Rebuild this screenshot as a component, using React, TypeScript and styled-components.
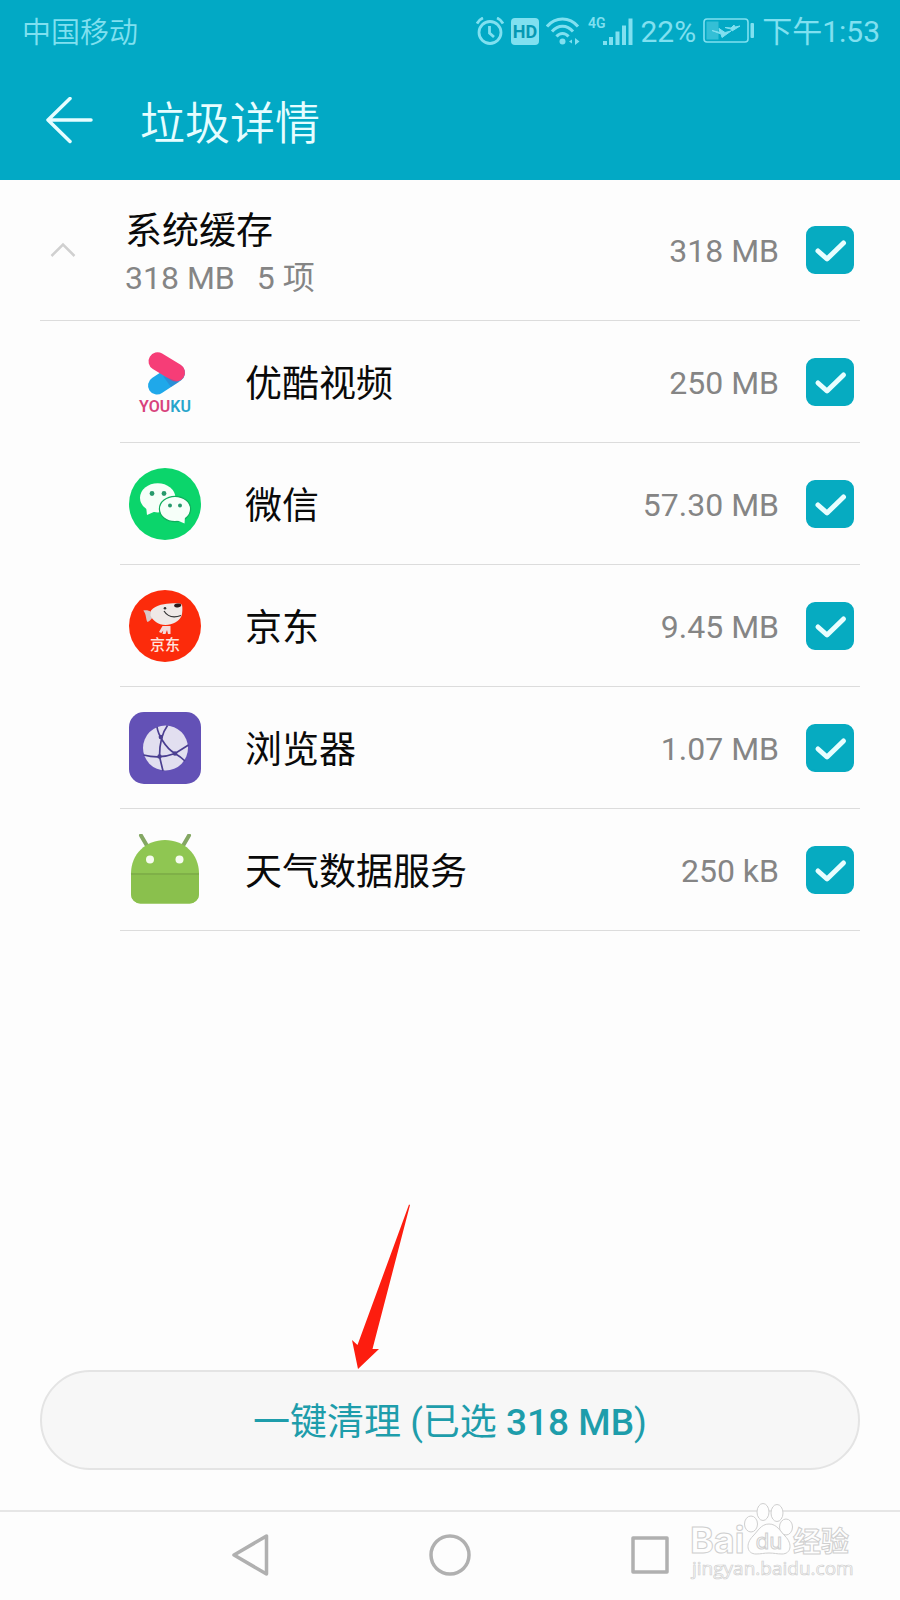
import React, { useState } from "react";
import styled, { createGlobalStyle } from "styled-components";

const GlobalStyle = createGlobalStyle`
  *, *::before, *::after { box-sizing: border-box; }
  body {
    margin: 0;
    background: #fdfdfd;
    color: #0a0a0a;
    font-family: Roboto, "Noto Sans CJK SC", sans-serif;
  }
  button, input { font: inherit; margin: 0; }
`;

const Page = styled.div`
  display: flex;
  flex-direction: column;
  min-height: 100vh;
`;

const Header = styled.header`
  background: #02a9c5;
`;

const StatusBar = styled.div`
  display: flex;
  align-items: center;
  justify-content: space-between;
  height: 62px;
  padding: 0 20px 0 22px;
  color: #80e0f0;
  font-size: 29px;
  line-height: 40px;
`;

const StatusText = styled.span`
  padding-top: 2px;
`;

const Carrier = styled(StatusText)`
  padding-top: 4px;
  font-weight: 350;
`;

const StatusIcons = styled.div`
  display: flex;
  align-items: center;
  gap: 7px;
  font-size: 30px;
`;

const AppBar = styled.div`
  display: flex;
  align-items: center;
  height: 118px;
  padding: 0 40px;
`;

const BackButton = styled.button`
  display: flex;
  width: 100px;
  padding: 0 6px;
  border: 0;
  background: none;
  color: #e6fdff;
  cursor: pointer;
`;

const Title = styled.h1`
  margin: 0;
  padding-top: 8px;
  color: #e6fdff;
  font-size: 45px;
  font-weight: 350;
  line-height: 60px;
`;

const Main = styled.main`
  flex: 1;
  padding: 0 40px;
`;

const GroupRow = styled.div`
  display: flex;
  align-items: center;
  height: 141px;
  padding-right: 6px;
  border-bottom: 1px solid #dcdcdc;
`;

const ExpandButton = styled.button`
  display: flex;
  width: 85px;
  padding: 10px;
  border: 0;
  background: none;
  cursor: pointer;
`;

const GroupText = styled.div`
  flex: 1;
  padding-top: 2px;
`;

const Name = styled.label`
  display: block;
  flex: 1;
  padding-top: 6px;
  font-size: 37px;
  line-height: 48px;
`;

const Summary = styled.div`
  display: flex;
  gap: 22px;
  color: #858585;
  font-size: 32px;
  line-height: 44px;
`;

const Size = styled.span`
  margin-right: 27px;
  padding-top: 2px;
  color: #858585;
  font-size: 32px;
  line-height: 44px;
`;

const List = styled.ul`
  margin: 0;
  padding: 0 0 0 80px;
  list-style: none;
`;

const Item = styled.li`
  display: flex;
  align-items: center;
  height: 122px;
  padding: 0 6px 0 9px;
  border-bottom: 1px solid #dcdcdc;
`;

const AppIcon = styled.svg`
  flex: none;
  width: 72px;
  height: 72px;
  margin-right: 44px;
`;

const CheckWrap = styled.span`
  display: grid;
  flex: none;
  width: 48px;
  height: 48px;

  > * { grid-area: 1 / 1; }
  > svg { pointer-events: none; }
`;

const CheckInput = styled.input`
  appearance: none;
  width: 48px;
  height: 48px;
  border: 2px solid #b5b5b5;
  border-radius: 9px;
  background: #fff;
  cursor: pointer;

  &:checked {
    border-color: #06abc1;
    background: #06abc1;
  }
`;

const Actions = styled.div`
  position: relative;
  padding: 0 40px 40px;
`;

const CleanButton = styled.button`
  display: block;
  width: 100%;
  height: 100px;
  padding: 0 0 2px;
  border: 2px solid #e4e4e4;
  border-radius: 50px;
  background: #f7f7f7;
  color: #1e9dab;
  font-size: 37px;
  cursor: pointer;
`;

const Amount = styled.span`
  font-weight: 500;
`;

const Pointer = styled.svg`
  position: absolute;
  bottom: 100%;
  left: calc(50% - 99px);
  width: 60px;
  height: 166px;
`;

const NavBar = styled.nav`
  position: relative;
  display: grid;
  grid-template-columns: repeat(3, 1fr);
  height: 90px;
  padding: 0 calc(100% / 6);
  border-top: 2px solid #e6e6e6;
`;

const NavButton = styled.button`
  display: grid;
  place-items: center;
  padding: 0;
  border: 0;
  background: none;
  cursor: pointer;
`;

const Watermark = styled.svg`
  position: absolute;
  right: 40px;
  bottom: 17px;
  width: 170px;
  height: 84px;
  pointer-events: none;
`;

function Check({ id, checked, onChange }: { id: string; checked: boolean; onChange: () => void }) {
  return (
    <CheckWrap>
      <CheckInput type="checkbox" id={id} checked={checked} onChange={onChange} />
      {checked && (
        <svg width="48" height="48" viewBox="0 0 48 48" fill="none" stroke="#e8feff" strokeWidth="5" strokeLinecap="round" strokeLinejoin="round">
          <path d="M12 25L21 33L37.500 17" />
        </svg>
      )}
    </CheckWrap>
  );
}

const YoukuIcon = () => (
  <AppIcon viewBox="0 0 72 72" aria-hidden="true">
    <path d="M28 39.500L47 27" stroke="#1fa8ea" strokeWidth="18" strokeLinecap="round" />
    <path d="M28.500 15.300L47 26.500" stroke="#f63d77" strokeWidth="18" strokeLinecap="round" />
    <path d="M34 30l16 6-8 5z" fill="#3b62b5" opacity=".35" />
    <text x="36" y="66" textAnchor="middle" fontFamily="Roboto, sans-serif" fontSize="16" fontWeight="600">
      <tspan fill="#d8437c">YOU</tspan>
      <tspan fill="#28a5cb">KU</tspan>
    </text>
  </AppIcon>
);

const WechatIcon = () => (
  <AppIcon viewBox="0 0 72 72" aria-hidden="true">
    <circle cx="36" cy="36" r="36" fill="#0bd56b" />
    <g fill="#f6fff9">
      <path d="M17 38l1 9 9-4z" />
      <ellipse cx="28.700" cy="29.800" rx="17.700" ry="14.600" />
      <ellipse cx="46" cy="41" rx="15.600" ry="12.600" stroke="#0fae5c" strokeWidth="1.200" />
      <path d="M56 48l-.500 7.500-8-3.500z" />
    </g>
    <g fill="#279a6c">
      <circle cx="23" cy="25.500" r="2.400" />
      <circle cx="35" cy="25.500" r="2.400" />
      <circle cx="41" cy="37.500" r="2" />
      <circle cx="51" cy="37.500" r="2" />
    </g>
  </AppIcon>
);

const JdIcon = () => (
  <AppIcon viewBox="0 0 72 72" aria-hidden="true">
    <circle cx="36" cy="36" r="36" fill="#fc2b0b" />
    <path d="M14.300 20.500c3-.800 5.500 0 8.200 1.200L24 27c-1.500 2-3.500 4.500-5.500 5-1.800-2.500-1-8-4.200-11.500z" fill="#d9c8c8" />
    <path d="M22 20.500c5-5.500 14-7 22-7.200 4 0 8-.300 9 1.700.700 3 .500 8-.500 11-2.500 5.500-9 9-16 9-7.500 0-13-5-15-9.500z" fill="#efe9e7" />
    <ellipse cx="48.700" cy="15.500" rx="3.600" ry="1.900" fill="#2b1a1a" transform="rotate(-8 48.700 15.500)" />
    <circle cx="36" cy="18.300" r="1.300" fill="#333" />
    <path d="M35 21c3.500 5.500 10 7 17 4.500" fill="none" stroke="#333" strokeWidth="1.200" />
    <path d="M33.500 36h8v8h-2.500l-1-4-1.500 4h-3l.800-3.500-2 2.500-2.300-1z" fill="#f3dada" />
    <text x="36" y="60" textAnchor="middle" fontFamily="'Noto Sans CJK SC', sans-serif" fontSize="15" fontWeight="500" fill="#ffe3dd">京东</text>
  </AppIcon>
);

const BrowserIcon = () => (
  <AppIcon viewBox="0 0 72 72" aria-hidden="true">
    <rect width="72" height="72" rx="15" fill="#6351b6" />
    <circle cx="36.500" cy="36" r="22.500" fill="#e2dff0" />
    <g fill="none" stroke="#4b3f91" strokeWidth="1.700">
      <path d="M28 15C29 22 36 36 46 41.500Q52 45 56 49" />
      <path d="M38.500 13.500C33 21 30.500 30 30.500 44.500L34 59" />
      <path d="M14.500 43C26 46 37 45 46 41.500L59.500 33" />
    </g>
    <g fill="#4b3f91">
      <circle cx="31.800" cy="25" r="2.200" />
      <circle cx="30.500" cy="44.500" r="2.200" />
      <circle cx="46" cy="41.500" r="2.200" />
    </g>
  </AppIcon>
);

const AndroidIcon = () => (
  <AppIcon viewBox="0 0 72 72" aria-hidden="true">
    <path d="M12 1.500l7 12M60 1.500l-7 12" stroke="#84a763" strokeWidth="4" strokeLinecap="round" />
    <path d="M2 39.500C2 20 17 6 36 6s34 14 34 33.500V60a9.500 9.500 0 0 1-9.500 9.500h-49A9.500 9.500 0 0 1 2 60z" fill="#8fc652" />
    <path d="M2 39.500h68V60a9.500 9.500 0 0 1-9.500 9.500h-49A9.500 9.500 0 0 1 2 60z" fill="#8ac04d" />
    <path d="M2 40h68" stroke="#7fb048" strokeWidth="2" />
    <circle cx="21" cy="25.500" r="4" fill="#f6fbef" />
    <circle cx="50.500" cy="25.500" r="4" fill="#f6fbef" />
  </AppIcon>
);

const items = [
  { id: "youku", name: "优酷视频", size: "250 MB", Icon: YoukuIcon },
  { id: "wechat", name: "微信", size: "57.30 MB", Icon: WechatIcon },
  { id: "jd", name: "京东", size: "9.45 MB", Icon: JdIcon },
  { id: "browser", name: "浏览器", size: "1.07 MB", Icon: BrowserIcon },
  { id: "weather", name: "天气数据服务", size: "250 kB", Icon: AndroidIcon },
];

const AlarmIcon = () => (
  <svg width="28" height="28" viewBox="0 0 28 28" fill="none" stroke="currentColor" strokeWidth="2.800" aria-hidden="true">
    <circle cx="14" cy="15.500" r="11" />
    <path d="M1 6.500C2.500 4 4.500 2 7 1M27 6.500C25.500 4 23.500 2 21 1" />
    <path d="M13.500 9v7l4.500 4" />
  </svg>
);

const HdIcon = () => (
  <svg width="28" height="28" viewBox="0 0 28 28" aria-hidden="true">
    <rect y="1" width="28" height="27" rx="4" fill="currentColor" />
    <text x="14" y="21" textAnchor="middle" fontFamily="Roboto, sans-serif" fontSize="18" fontWeight="700" fill="#0598b3">HD</text>
  </svg>
);

const WifiIcon = () => (
  <svg width="35" height="28" viewBox="0 0 35 28" fill="none" stroke="currentColor" strokeWidth="3" aria-hidden="true">
    <path d="M1 9.500C9.500-.500 23.500-.500 32 9.500" />
    <path d="M6 14.500c6-7 15-7 21 0" />
    <path d="M10.500 19.500c3.500-4 8.500-4 12 0" />
    <circle cx="16.500" cy="24.500" r="3" fill="currentColor" stroke="none" />
    <path d="M29 21l4.500 3.500L29 28zM26 22.500v4l-3-2z" fill="currentColor" stroke="none" />
  </svg>
);

const SignalIcon = () => (
  <svg width="45" height="28" viewBox="0 0 45 28" fill="currentColor" aria-hidden="true">
    <text x="0" y="11" fontFamily="Roboto, sans-serif" fontSize="14" fontWeight="600">4G</text>
    <path d="M15 24h4v4h-4zM21 20h4v8h-4zM27.500 14.500h4V28h-4zM34 8.500h4V28h-4zM40.500 1.500h4V28h-4z" />
  </svg>
);

const BatteryIcon = () => (
  <svg width="52" height="26" viewBox="0 0 52 26" aria-hidden="true">
    <rect x="1" y="1" width="44" height="23" rx="3" fill="none" stroke="currentColor" strokeWidth="1.600" />
    <rect x="3.500" y="3.500" width="12" height="18" fill="currentColor" opacity=".4" />
    <path d="M9 12.500l8 2-1-4 6 4 6-1.500-9 6.500-1-3.500zM22 9.500l6 .500 3-3 1 2 5-1-8 5-1-2z" fill="currentColor" stroke="currentColor" strokeLinejoin="round" />
    <rect x="47.500" y="5" width="3.500" height="15" rx="1" fill="currentColor" />
  </svg>
);

export default function App() {
  const [checked, setChecked] = useState<Record<string, boolean>>(
    Object.fromEntries(items.map((i) => [i.id, true]))
  );
  const [open, setOpen] = useState(true);
  const all = items.every((i) => checked[i.id]);
  const toggleAll = () => setChecked(Object.fromEntries(items.map((i) => [i.id, !all])));

  return (
    <>
      <GlobalStyle />
      <Page>
        <Header>
          <StatusBar>
            <Carrier>中国移动</Carrier>
            <StatusIcons>
              <AlarmIcon />
              <HdIcon />
              <WifiIcon />
              <SignalIcon />
              <StatusText>22%</StatusText>
              <BatteryIcon />
              <StatusText>下午1:53</StatusText>
            </StatusIcons>
          </StatusBar>
          <AppBar>
            <BackButton aria-label="返回">
              <svg width="48" height="48" viewBox="0 0 48 48" fill="none" stroke="currentColor" strokeWidth="3.500" strokeLinecap="round" strokeLinejoin="round">
                <path d="M24 1.500L2 23l22 21.500M2.500 23H45" />
              </svg>
            </BackButton>
            <Title>垃圾详情</Title>
          </AppBar>
        </Header>

        <Main>
          <GroupRow>
            <ExpandButton aria-label="展开" aria-expanded={open} onClick={() => setOpen(!open)}>
              <svg width="26" height="16" viewBox="0 0 26 16" fill="none" stroke="#d0d0d0" strokeWidth="2.500">
                <path d={open ? "M1.500 14L13 2.500L24.500 14" : "M1.500 2.500L13 14L24.500 2.500"} />
              </svg>
            </ExpandButton>
            <GroupText>
              <Name htmlFor="cache">系统缓存</Name>
              <Summary>
                <span>318 MB</span>
                <span>5 项</span>
              </Summary>
            </GroupText>
            <Size>318 MB</Size>
            <Check id="cache" checked={all} onChange={toggleAll} />
          </GroupRow>
          {open && (
            <List>
              {items.map(({ id, name, size, Icon }) => (
                <Item key={id}>
                  <Icon />
                  <Name htmlFor={id}>{name}</Name>
                  <Size>{size}</Size>
                  <Check id={id} checked={checked[id]} onChange={() => setChecked({ ...checked, [id]: !checked[id] })} />
                </Item>
              ))}
            </List>
          )}
        </Main>

        <Actions>
          <Pointer viewBox="0 0 60 166" aria-hidden="true">
            <path d="M58 .5L59 1L21.500 145L28 145L7 165L1 136L6.500 141Z" fill="#fd1d0f" />
          </Pointer>
          <CleanButton>
            一键清理 (已选 <Amount>318 MB</Amount>)
          </CleanButton>
        </Actions>

        <NavBar>
          <NavButton aria-label="后退">
            <svg width="44" height="44" viewBox="0 0 44 44" fill="none" stroke="#b0b0b0" strokeWidth="3.500" strokeLinejoin="round">
              <path d="M38.500 2v38L6 21z" />
            </svg>
          </NavButton>
          <NavButton aria-label="主页">
            <svg width="44" height="44" viewBox="0 0 44 44" fill="none" stroke="#b0b0b0" strokeWidth="3.500">
              <circle cx="22" cy="21" r="19" />
            </svg>
          </NavButton>
          <NavButton aria-label="最近任务">
            <svg width="44" height="44" viewBox="0 0 44 44" fill="none" stroke="#b0b0b0" strokeWidth="3.500" strokeLinejoin="round">
              <rect x="5" y="4" width="34" height="34" />
            </svg>
          </NavButton>
          <Watermark viewBox="0 0 170 84" fill="#fefefe" stroke="#cfcfcf" strokeWidth="1" aria-hidden="true">
            <g fontFamily="Inter, 'Noto Sans CJK SC', sans-serif" fontWeight="700">
              <text x="0" y="54" fontSize="36">Bai</text>
              <text x="103" y="53" fontSize="28">经验</text>
            </g>
            <ellipse cx="61" cy="25" rx="6.500" ry="8" />
            <ellipse cx="73" cy="13" rx="6" ry="8.500" />
            <ellipse cx="87" cy="14" rx="6" ry="8.500" />
            <ellipse cx="96" cy="28" rx="6.500" ry="8" />
            <path d="M79 25c8 0 11 7 16 12 8 8 6 18-3 18-5 0-8-1-13-1s-8 1-13 1c-9 0-11-10-3-18 5-5 8-12 16-12z" />
            <text x="79" y="50" textAnchor="middle" fontFamily="Inter, sans-serif" fontSize="22">du</text>
            <text x="2" y="76" fontFamily="'Open Sans', sans-serif" fontSize="19" strokeWidth=".700">jingyan.baidu.com</text>
          </Watermark>
        </NavBar>
      </Page>
    </>
  );
}
